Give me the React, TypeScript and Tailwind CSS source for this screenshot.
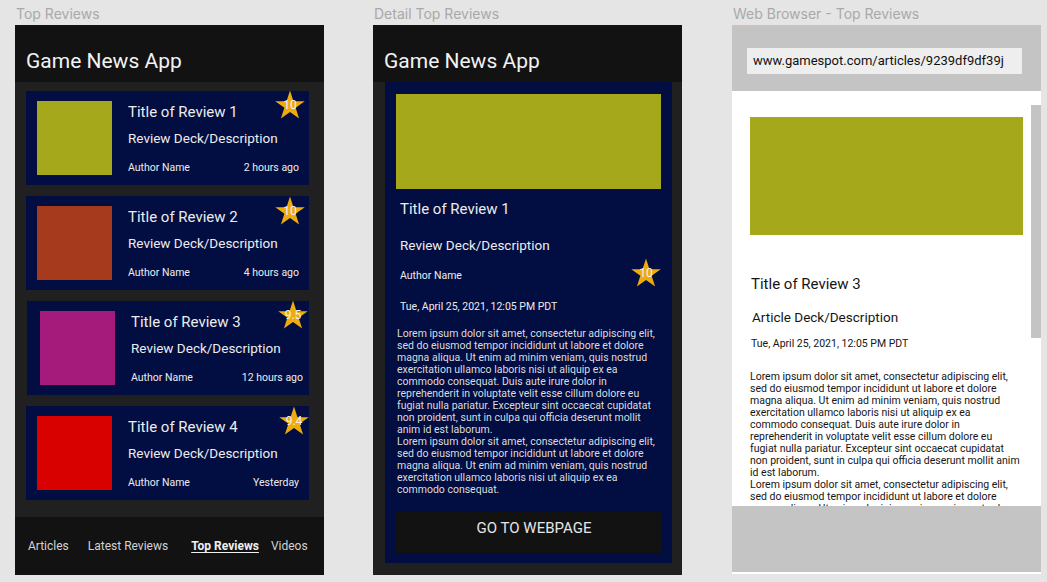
import React from "react";

const lorem1 = [
  "Lorem ipsum dolor sit amet, consectetur adipiscing elit,",
  "sed do eiusmod tempor incididunt ut labore et dolore",
  "magna aliqua. Ut enim ad minim veniam, quis nostrud",
  "exercitation ullamco laboris nisi ut aliquip ex ea",
  "commodo consequat. Duis aute irure dolor in",
  "reprehenderit in voluptate velit esse cillum dolore eu",
  "fugiat nulla pariatur. Excepteur sint occaecat cupidatat",
  "non proident, sunt in culpa qui officia deserunt mollit",
  "anim id est laborum.",
  "Lorem ipsum dolor sit amet, consectetur adipiscing elit,",
  "sed do eiusmod tempor incididunt ut labore et dolore",
  "magna aliqua. Ut enim ad minim veniam, quis nostrud",
  "exercitation ullamco laboris nisi ut aliquip ex ea",
  "commodo consequat.",
];

const lorem2 = [
  "Lorem ipsum dolor sit amet, consectetur adipiscing elit,",
  "sed do eiusmod tempor incididunt ut labore et dolore",
  "magna aliqua. Ut enim ad minim veniam, quis nostrud",
  "exercitation ullamco laboris nisi ut aliquip ex ea",
  "commodo consequat. Duis aute irure dolor in",
  "reprehenderit in voluptate velit esse cillum dolore eu",
  "fugiat nulla pariatur. Excepteur sint occaecat cupidatat",
  "non proident, sunt in culpa qui officia deserunt mollit anim",
  "id est laborum.",
  "Lorem ipsum dolor sit amet, consectetur adipiscing elit,",
  "sed do eiusmod tempor incididunt ut labore et dolore",
  "magna aliqua. Ut enim ad minim veniam, quis nostrud",
  "exercitation ullamco laboris nisi ut aliquip ex ea",
];

function Star({ value }: { value: string }) {
  return (
    <div className="relative w-[30px] h-[29px]">
      <svg width="30" height="29" viewBox="0 0 30 29" className="absolute inset-0">
        <polygon
          points="15,0.5 18.48,11.21 29.74,11.21 20.63,17.83 24.11,28.54 15,21.92 5.89,28.54 9.37,17.83 0.26,11.21 11.52,11.21"
          fill="#eeab0c"
        />
      </svg>
      <div className="absolute inset-0 flex items-center justify-center text-[12px] leading-none text-[#f4f4f4] pt-[1px]">
        {value}
      </div>
    </div>
  );
}

type CardData = {
  title: string;
  color: string;
  time: string;
  score: string;
  shift?: boolean;
  starCls: string;
};

const cards: CardData[] = [
  { title: "Title of Review 1", color: "bg-[#a5a81b]", time: "2 hours ago", score: "10", starCls: "top-[-1px] right-[4px]" },
  { title: "Title of Review 2", color: "bg-[#a53b1c]", time: "4 hours ago", score: "10", starCls: "top-0 right-[4px]" },
  { title: "Title of Review 3", color: "bg-[#a51b7b]", time: "12 hours ago", score: "9.5", shift: true, starCls: "top-[-1px] right-[1px]" },
  { title: "Title of Review 4", color: "bg-[#d90000]", time: "Yesterday", score: "9.4", starCls: "top-0 right-0" },
];

function ReviewCard({ c }: { c: CardData }) {
  return (
    <div className={`relative h-[94px] bg-[#020d41] flex pt-[10px] ${c.shift ? "pl-[13px] ml-[1px]" : "pl-[11px]"}`}>
      <div className={`w-[75px] h-[74px] shrink-0 ${c.color}`} />
      <div className={`flex-1 ml-[16px] pt-[1px] ${c.shift ? "pr-[6px]" : "pr-[10px]"} text-[#ececec]`}>
        <div className="h-[20px] leading-[20px] text-[15px]">{c.title}</div>
        <div className="mt-[6px] h-[20px] leading-[20px] text-[13.5px]">Review Deck/Description</div>
        <div className="mt-[13px] h-[14px] leading-[14px] text-[10.5px] flex justify-between">
          <span>Author Name</span>
          <span>{c.time}</span>
        </div>
      </div>
      <div className={`absolute ${c.starCls}`}>
        <Star value={c.score} />
      </div>
    </div>
  );
}

function Label({ text }: { text: string }) {
  return (
    <div className="h-[25px] pt-[5px] pl-[1px] text-[14px] leading-[17px] text-[#a9a9a9] font-['Inter',sans-serif] whitespace-nowrap">
      {text}
    </div>
  );
}

function Header() {
  return (
    <div className="h-[57px] bg-[#121212] pl-[11px] pt-[23px]">
      <div className="text-[21px] leading-[26px] text-[#f2f2f2]">Game News App</div>
    </div>
  );
}

export default function App() {
  return (
    <div className="w-[1047px] h-[582px] bg-[#e5e5e5] flex font-['Roboto','Liberation_Sans',sans-serif] overflow-hidden">
      {/* Frame 1 */}
      <div className="ml-[15px] w-[309px] flex flex-col">
        <Label text="Top Reviews" />
        <div className="h-[550px] flex flex-col bg-[#202020]">
          <Header />
          <div className="h-[435px] pt-[9px] pl-[11px] pr-[15px] flex flex-col gap-[11px]">
            {cards.map((c) => (
              <ReviewCard key={c.title} c={c} />
            ))}
          </div>
          <div className="h-[58px] bg-[#121212] flex items-center text-[12px] text-[#d2d2d2] whitespace-nowrap">
            <span className="ml-[13px]">Articles</span>
            <span className="ml-[19px]">Latest Reviews</span>
            <span className="ml-[23px] font-bold underline underline-offset-2 text-[#f0f0f0]">Top Reviews</span>
            <span className="ml-[12px]">Videos</span>
          </div>
        </div>
      </div>

      {/* Frame 2 */}
      <div className="ml-[49px] w-[309px] flex flex-col">
        <Label text="Detail Top Reviews" />
        <div className="h-[550px] flex flex-col bg-[#202020]">
          <Header />
          <div className="flex-1 pl-[12px] pr-[10px] pb-[12px] flex">
            <div className="flex-1 bg-[#020d41] pt-[12px] px-[11px] flex flex-col text-[#ececec]">
              <div className="h-[95px] bg-[#a5a81b]" />
              <div className="mt-[10px] pl-[4px] h-[20px] leading-[20px] text-[15px]">Title of Review 1</div>
              <div className="mt-[16px] pl-[4px] h-[20px] leading-[20px] text-[13.5px]">Review Deck/Description</div>
              <div className="mt-[14px] pl-[4px] h-[14px] leading-[14px] text-[10.5px] relative">
                Author Name
                <div className="absolute right-0 top-[-11px]">
                  <Star value="10" />
                </div>
              </div>
              <div className="mt-[17px] pl-[4px] h-[14px] leading-[14px] text-[10.5px]">Tue, April 25, 2021, 12:05 PM PDT</div>
              <div className="mt-[14px] pl-[1px] text-[10.5px] leading-[12px] text-[#dcdcdc] whitespace-nowrap">
                {lorem1.map((l, i) => (
                  <div key={i}>{l}</div>
                ))}
              </div>
              <div className="mt-[16px] h-[41px] bg-[#121212] flex items-center justify-center pb-[8px] pl-[11px] text-[15px] text-[#e6e6e6]">
                GO TO WEBPAGE
              </div>
            </div>
          </div>
        </div>
      </div>

      {/* Frame 3 */}
      <div className="ml-[50px] w-[309px] flex flex-col">
        <Label text="Web Browser - Top Reviews" />
        <div className="h-[549px] flex flex-col bg-white">
          <div className="h-[66px] bg-[#c4c4c4] pl-[15px] pt-[23px]">
            <div className="w-[275px] h-[26px] bg-[#eeeeee] pl-[6px] flex items-center text-[13px] text-[#111] whitespace-nowrap overflow-hidden">
              www.gamespot.com/articles/9239df9df39j
            </div>
          </div>
          <div className="h-[415px] relative overflow-hidden pl-[18px] pt-[26px] text-[#161616]">
            <div className="w-[273px] h-[118px] bg-[#a5a81b]" />
            <div className="mt-[39px] pl-[1px] h-[20px] leading-[20px] text-[15px]">Title of Review 3</div>
            <div className="mt-[13px] pl-[2px] h-[20px] leading-[20px] text-[13.5px]">Article Deck/Description</div>
            <div className="mt-[10px] pl-[1px] h-[14px] leading-[14px] text-[10.5px]">Tue, April 25, 2021, 12:05 PM PDT</div>
            <div className="mt-[20px] text-[10.5px] leading-[12px] whitespace-nowrap">
              {lorem2.map((l, i) => (
                <div key={i}>{l}</div>
              ))}
            </div>
            <div className="absolute right-0 top-[14px] w-[10px] h-[233px] bg-[#c4c4c4]" />
          </div>
          <div className="h-[66px] bg-[#c4c4c4]" />
        </div>
      </div>
    </div>
  );
}
